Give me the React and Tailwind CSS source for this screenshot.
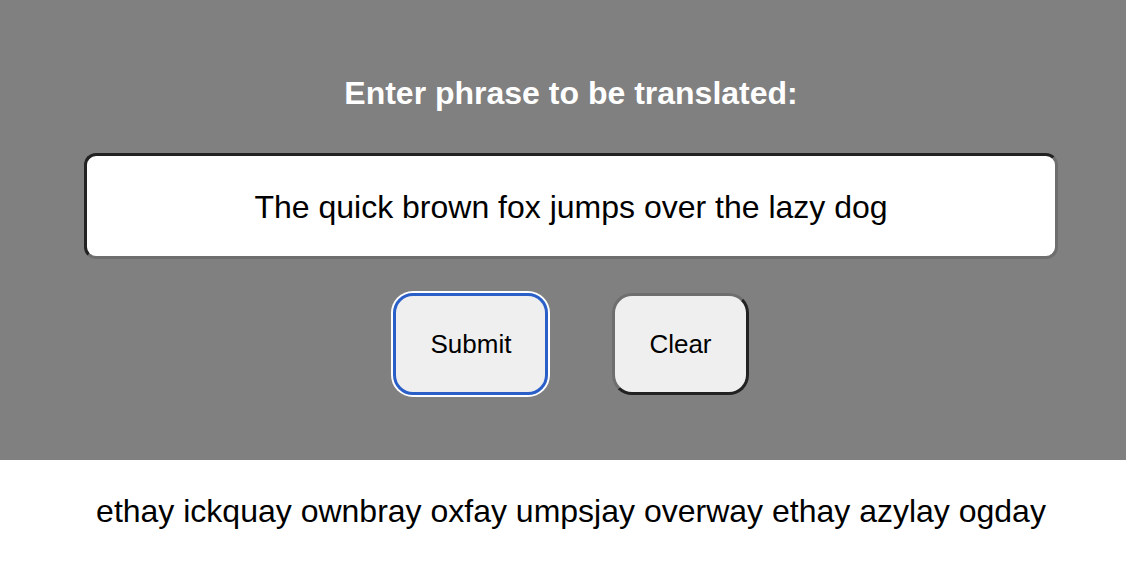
import React, { useState } from "react";

export default function App() {
  const [phrase, setPhrase] = useState("The quick brown fox jumps over the lazy dog");

  return (
    <div className="min-h-screen bg-white font-['Liberation_Sans',Arial,sans-serif]">
      <div className="flex flex-col items-center bg-[#808080] pl-[16px] pt-[75px] pb-[65px]">
        <h1 className="text-[32px] font-bold leading-[37px] text-white">
          Enter phrase to be translated:
        </h1>

        <input
          value={phrase}
          onChange={(e) => setPhrase(e.target.value)}
          className="mt-[41px] h-[106px] w-[974px] rounded-[12px] border-[3px] border-t-[#222] border-l-[#222] border-r-[#6e6e6e] border-b-[#6e6e6e] bg-white pt-[2px] text-center text-[32px] text-black outline-none"
        />

        <div className="mt-[34px] flex gap-[64px]">
          <button className="h-[102px] rounded-[20px] border-[3px] border-[#2b5fc8] bg-[#efefef] px-[34px] text-[26px] text-black shadow-[0_0_0_2px_#ffffff]">
            Submit
          </button>
          <button
            onClick={() => setPhrase("")}
            className="h-[102px] rounded-[20px] border-[3px] border-t-[#6e6e6e] border-l-[#6e6e6e] border-r-[#222] border-b-[#222] bg-[#efefef] px-[34px] text-[26px] text-black"
          >
            Clear
          </button>
        </div>
      </div>

      <p className="pl-[16px] pt-[33px] text-center text-[32px] leading-[37px] text-black">
        ethay ickquay ownbray oxfay umpsjay overway ethay azylay ogday
      </p>
    </div>
  );
}
